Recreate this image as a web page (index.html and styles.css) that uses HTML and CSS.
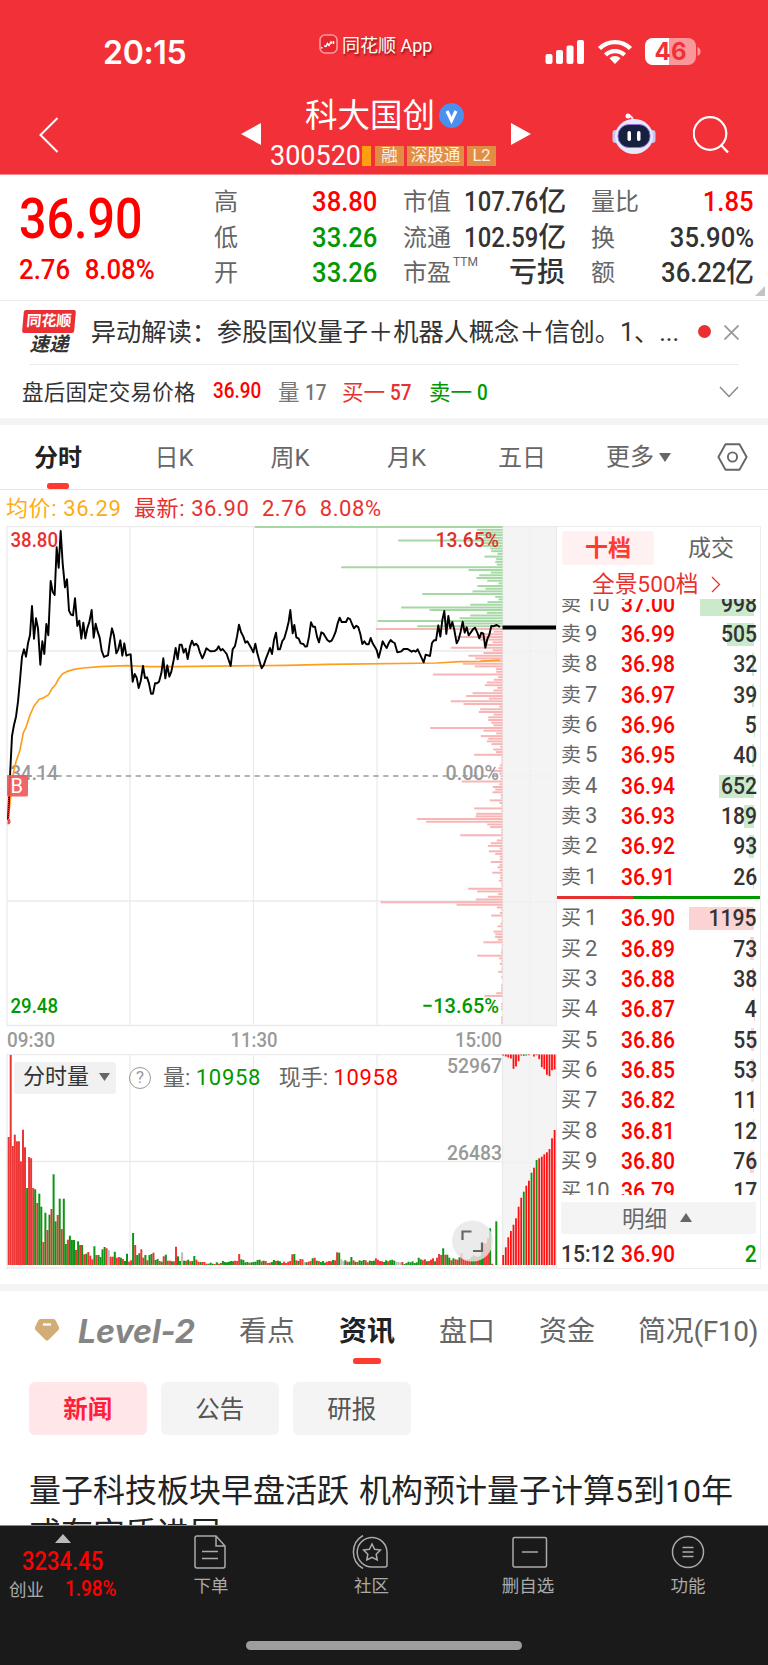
FILE: index.html
```html
<!DOCTYPE html>
<html lang="zh-CN">
<head>
    <meta charset="UTF-8">
    <title>科大国创 300520</title>
    <link rel="stylesheet" href="styles.css">
</head>
<body>
    <header class="header">
        <div class="status-bar">
            <span class="clock">20:15</span>
            <span class="app-name">
                <svg width="19" height="20" viewBox="0 0 19 20"><rect x="1" y="1" width="17" height="18" rx="5" fill="#e8262f" stroke="#f79a9e" stroke-width="1.6"/><path d="M2 13.500l1.500.5M5 12l2 .5 1.500-3 1.500 2 2-3.500 1 1.500M14.500 7v3" fill="none" stroke="#fff" stroke-width="1.500"/></svg>
                同花顺 App
            </span>
            <svg class="signals" width="156" height="30" viewBox="545 37 156 30">
                <g fill="#fff">
                    <rect x="545.500" y="54" width="7" height="10" rx="2"/>
                    <rect x="556" y="50" width="7" height="14" rx="2"/>
                    <rect x="566.500" y="45.500" width="7" height="18.500" rx="2"/>
                    <rect x="577" y="40" width="7" height="24" rx="2"/>
                    <path d="M615 64l-5.500-5.800a8 8 0 0 1 11 0z"/>
                </g>
                <g fill="none" stroke="#fff" stroke-width="4.400">
                    <path d="M605.500 55a13.500 13.500 0 0 1 19 0"/>
                    <path d="M599.500 48.500a22 22 0 0 1 31 0"/>
                </g>
                <rect x="645" y="38" width="51" height="27" rx="8" fill="#fa979b"/>
                <path d="M653 38h16v27h-16a8 8 0 0 1-8-8v-11a8 8 0 0 1 8-8z" fill="#fff"/>
                <path d="M697.500 47q3 1 3 4.500t-3 4.500z" fill="#fa979b"/>
                <text x="654.500" y="60" class="battery-text" textLength="32">46</text>
            </svg>
        </div>
        <div class="nav-bar">
            <svg class="back" width="20" height="36" viewBox="0 0 20 36"><path d="M18.500 1L1.500 18l17 17" fill="none" stroke="#fff" stroke-width="2"/></svg>
            <svg class="arrow" width="20" height="24" viewBox="0 0 20 24"><path d="M0 12L20 1v22z" fill="#fff"/></svg>
            <div class="stock">
                <h1>科大国创<svg width="25" height="25" viewBox="0 0 25 25"><circle cx="12.500" cy="12.500" r="12.500" fill="#4a90ee"/><path d="M8 8l4.500 9.500L17 8" fill="none" stroke="#fff" stroke-width="3.200"/></svg></h1>
                <div class="stock-code">300520<i></i><b>融</b><b class="wide">深股通</b><b>L2</b></div>
            </div>
            <svg class="arrow" width="20" height="24" viewBox="0 0 20 24"><path d="M20 12L0 1v22z" fill="#fff"/></svg>
            <svg class="robot" width="44" height="42" viewBox="0 0 44 42">
                <path d="M15 2q6 1 6 6" fill="none" stroke="#e5e3f5" stroke-width="2"/>
                <circle cx="16" cy="3" r="2.500" fill="#fff"/>
                <rect x="0.500" y="17" width="6" height="13" rx="3" fill="#c6c7ee"/>
                <rect x="37.500" y="17" width="6" height="13" rx="3" fill="#c6c7ee"/>
                <ellipse cx="22" cy="23.500" rx="19" ry="17.500" fill="#e8e8fa"/>
                <rect x="6" y="11.500" width="32" height="23" rx="11" fill="#17203f" stroke="#8f6fe0" stroke-width="1"/>
                <rect x="15.500" y="18" width="3.500" height="10" rx="1.700" fill="#fff"/>
                <rect x="25" y="18" width="3.500" height="10" rx="1.700" fill="#fff"/>
            </svg>
            <svg width="38" height="38" viewBox="0 0 38 38"><circle cx="17" cy="17.500" r="16.300" fill="none" stroke="#fff" stroke-width="2.200"/><path d="M28 29l7 7.500" stroke="#fff" stroke-width="2.400"/></svg>
        </div>
    </header>

    <section class="quote">
        <div class="quote-main">
            <div class="last num red">36.90</div>
            <div class="change num red"><span>2.76</span><span>8.08%</span></div>
        </div>
        <dl>
            <div><dt>高</dt><dd class="red"><span class="num end">38.80</span></dd></div>
            <div><dt>低</dt><dd class="green"><span class="num end">33.26</span></dd></div>
            <div><dt>开</dt><dd class="green"><span class="num end">33.26</span></dd></div>
        </dl>
        <dl>
            <div><dt>市值</dt><dd><span class="num end cap">107.76</span>亿</dd></div>
            <div><dt>流通</dt><dd><span class="num end cap">102.59</span>亿</dd></div>
            <div><dt>市盈<sup>TTM</sup></dt><dd>亏损</dd></div>
        </dl>
        <dl>
            <div><dt>量比</dt><dd class="red"><span class="num end">1.85</span></dd></div>
            <div><dt>换</dt><dd><span class="num end">35.90%</span></dd></div>
            <div><dt>额</dt><dd><span class="num end">36.22</span>亿</dd></div>
        </dl>
        <svg class="corner" width="10" height="10" viewBox="0 0 10 10"><path d="M10 0v10H0z" fill="#c4c4c4"/></svg>
    </section>

    <section class="notice">
        <div class="express"><b>同花顺</b><i>速递</i></div>
        <p>异动解读：参股国仪量子＋机器人概念＋信创。1、...</p>
        <span class="dot"></span>
        <svg width="15" height="15" viewBox="0 0 15 15"><path d="M.5 .5l14 14M14.500 .5l-14 14" stroke="#999" stroke-width="1.800"/></svg>
    </section>
    <section class="after-hours">
        <span class="label">盘后固定交易价格</span>
        <span class="price"><em class="num red">36.90</em></span>
        <span class="gray vol">量 <em class="num">17</em></span>
        <span class="red2 buy-one">买一 <em class="num">57</em></span>
        <span class="green">卖一 <em class="num">0</em></span>
        <svg width="20" height="12" viewBox="0 0 20 12"><path d="M1 1l9 9.500L19 1" fill="none" stroke="#888" stroke-width="1.500"/></svg>
    </section>

    <nav class="periods">
        <a class="active">分时</a><a>日K</a><a>周K</a><a>月K</a><a>五日</a><a>更多<svg width="12" height="9" viewBox="0 0 12 9"><path d="M0 0h12L6 9z" fill="#666"/></svg></a>
        <svg class="setting" width="31" height="28" viewBox="0 0 31 28"><path d="M8.500 1.300h14L29.600 14l-7.100 12.700h-14L1.400 14z" fill="none" stroke="#666" stroke-width="1.900" stroke-linejoin="round"/><circle cx="15.500" cy="14" r="4.600" fill="none" stroke="#666" stroke-width="1.900"/></svg>
    </nav>
    <div class="legend"><span class="avg">均价: 36.29</span><span>最新: 36.90</span><span>2.76</span><span>8.08%</span></div>

    <main class="board">
        <div class="chart">
            <svg width="557" height="743" viewBox="0 526 557 743">
                <rect x="502.500" y="526" width="53.500" height="499" fill="#f4f4f4"/>
                <rect x="502.500" y="1054" width="53.500" height="211" fill="#f4f4f4"/>
                <g fill="none" stroke="#ebebeb" stroke-width="1.300">
                    <path d="M7 526.500H556.500V1025.500H7zM130 526V1025M253.500 526V1025M377 526V1025M502.500 526V1025M7 651H502M7 901H502"/>
                    <path d="M7 1054.700H556.500V1268H7zM130 1054V1268M253.500 1054V1268M377 1054V1268M502.500 1054V1268M7 1161.500H502"/>
                    <path d="M530 526V1025M530 1054V1265M503 651.500H556M503 776H556M503 902H556M503 1162.500H556" stroke-dasharray="1.500 2.500"/>
                </g>
                <path d="M7 776H502" stroke="#999" stroke-width="1.700" stroke-dasharray="5.300 4.600"/>
                <g id="depth" stroke-width="2"></g>
                <g class="label-text">
                    <text x="10.500" y="546.500" textLength="47.500" lengthAdjust="spacingAndGlyphs" fill="#e93030">38.80</text>
                    <text x="10.500" y="779.500" textLength="47.500" lengthAdjust="spacingAndGlyphs" fill="#999">34.14</text>
                    <text x="10.500" y="1012.500" textLength="47.500" lengthAdjust="spacingAndGlyphs" fill="#090">29.48</text>
                    <text x="435.500" y="546.500" textLength="63.500" lengthAdjust="spacingAndGlyphs" fill="#e03028">13.65%</text>
                    <text x="445.500" y="779.500" textLength="53.500" lengthAdjust="spacingAndGlyphs" fill="#999">0.00%</text>
                    <text x="422" y="1012.500" textLength="77" lengthAdjust="spacingAndGlyphs" fill="#090">−13.65%</text>
                </g>
                <g transform="translate(0 520) scale(.33333)" fill="none" stroke-linejoin="round">
                    <path id="avg" stroke="#ff9d1e" stroke-width="5"/>
                    <path id="price" stroke="#000" stroke-width="5.800"/>
                </g>
                <path d="M502.500 627.500H556" stroke="#000" stroke-width="4"/>
                <path d="M8.500 796v24" stroke="#e93030" stroke-width="1.500" stroke-dasharray="1 1"/>
                <path d="M7.500 818.500a3 3 0 0 1 0 6z" fill="#ef4a50"/>
                <rect x="7" y="775" width="21" height="21.500" rx="1.500" fill="#f05a5a" fill-opacity=".92"/>
                <text x="10.500" y="793" class="buy-mark">B</text>

                <g class="label-text" fill="#999">
                    <text x="7" y="1047" textLength="48" lengthAdjust="spacingAndGlyphs">09:30</text>
                    <text x="230.500" y="1047" textLength="47" lengthAdjust="spacingAndGlyphs">11:30</text>
                    <text x="455" y="1047" textLength="47" lengthAdjust="spacingAndGlyphs">15:00</text>
                    <text x="447" y="1073" textLength="55" lengthAdjust="spacingAndGlyphs">52967</text>
                    <text x="447" y="1160" textLength="55" lengthAdjust="spacingAndGlyphs">26483</text>
                </g>
                <g id="volume"></g>
                <circle cx="472.500" cy="1241" r="20.500" fill="#e6e6e6" fill-opacity=".82"/>
                <path d="M462.500 1240v-8.500h9M482 1242.500v8.500h-9" fill="none" stroke="#666" stroke-width="2.200"/>
            </svg>
            <div class="volume-info">
                <span class="picker">分时量<svg width="11" height="8" viewBox="0 0 11 8"><path d="M0 0h11L5.500 8z" fill="#666"/></svg></span>
                <span class="help">?</span>
                <span>量: <em class="green">10958</em></span>
                <span>现手: <em class="red">10958</em></span>
            </div>
        </div>
        <aside class="book">
            <div class="book-tabs"><span class="active">十档</span><span>成交</span></div>
            <div class="panorama">全景500档<svg width="10" height="17" viewBox="0 0 10 17"><path d="M1 1l7.500 7.500L1 16" fill="none" stroke="#e93030" stroke-width="1.300"/></svg></div>
            <ul class="orders sell" id="sell"></ul>
            <div class="ratio"></div>
            <ul class="orders buy" id="buy"></ul>
            <div class="detail-btn">明细<svg width="12" height="9" viewBox="0 0 12 9"><path d="M0 9h12L6 0z" fill="#666"/></svg></div>
            <div class="tick"><span class="time"><em class="num">15:12</em></span><em class="num red">36.90</em><em class="num end green amount">2</em></div>
        </aside>
    </main>

    <nav class="info-tabs">
        <svg width="26" height="24" viewBox="0 0 26 24"><path d="M6.500 1h13Q21 1 22 3l3 6q.5 1.500-.5 3L14.500 22q-1.500 1.500-3 0L1.500 12Q.5 10.500 1 9l3-6q1-2 2.500-2z" fill="#d2ad77"/><path d="M9 6.500h8" stroke="#fff" stroke-width="2.200"/></svg>
        <a class="level2">Level-2</a><a>看点</a><a class="active">资讯</a><a>盘口</a><a>资金</a><a class="f10">简况(F10)</a>
    </nav>
    <div class="pills"><span class="active">新闻</span><span>公告</span><span>研报</span></div>
    <article class="news">量子科技板块早盘活跃 机构预计量子计算5到10年或有实质进展</article>

    <footer class="toolbar">
        <div class="index">
            <svg width="16" height="9" viewBox="0 0 16 9"><path d="M0 9L8 0l8 9z" fill="#bbb"/></svg>
            <div class="index-value"><em class="num">3234.45</em></div>
            <div class="index-row">创业<em class="num">1.98%</em></div>
        </div>
        <div class="tool t1">
            <svg width="32" height="34" viewBox="0 0 32 34"><path d="M22 1H3Q1 1 1 3v28q0 2 2 2h26q2 0 2-2V11zM22 1v10h9M8 16.500h16M8 23.500h16"/></svg>下单
        </div>
        <div class="tool t2">
            <svg width="38" height="34" viewBox="0 0 38 34"><path d="M21 2.500a14.800 14.800 0 0 0 0 29.600h13q2 0 2-2V17.500a15 15 0 0 0-15-15zM12 .5a19 19 0 0 0 0 33M21 9l2.600 5.300 5.800.8-4.200 4.100 1 5.800-5.200-2.700-5.200 2.700 1-5.800-4.200-4.100 5.800-.8z"/></svg>社区
        </div>
        <div class="tool t3">
            <svg width="36" height="34" viewBox="0 0 36 34"><rect x="1" y="2.500" width="33.500" height="29.500" rx="1.500"/><path d="M10 17h16"/></svg>删自选
        </div>
        <div class="tool t4">
            <svg width="34" height="34" viewBox="0 0 34 34"><circle cx="17" cy="17" r="15.500"/><path d="M11.500 12.500h11M11.500 17h11M11.500 21.500h11"/></svg>功能
        </div>
        <div class="home-bar"></div>
    </footer>
    <script src="chart.js"></script>
</body>
</html>
```
FILE: styles.css
```css
* {
    box-sizing: border-box;
}

body {
    margin: 0;
    width: 768px;
    height: 1665px;
    overflow: hidden;
    background: #fff;
    color: #333;
    font-family: Roboto, "Noto Sans CJK SC", sans-serif;
    font-size: 24px;
    display: flex;
    flex-direction: column;
}

body > * {
    flex-shrink: 0;
}

svg {
    display: block;
    flex-shrink: 0;
}

h1, p, dl, dd, ul {
    margin: 0;
    padding: 0;
    list-style: none;
}

em {
    font-style: normal;
}

/* narrow digits */
.num {
    display: inline-block;
    font-weight: 500;
    transform: scaleX(.88);
    transform-origin: left center;
}

.num.end {
    transform-origin: right center;
}

.red { color: #f00; }
.red2 { color: #e93030; }
.green { color: #090; }
.gray { color: #777; }

/* header */
.header {
    height: 175px;
    background: #f23038;
    color: #fff;
    border-bottom: 1px solid #f8888c;
}

.status-bar {
    height: 90px;
    padding: 31px 67px 0 103px;
    display: flex;
}

.clock {
    width: 216px;
    font: 600 32px/44px Inter, sans-serif;
    letter-spacing: -.3px;
}

.app-name {
    width: 226px;
    height: 26px;
    display: flex;
    align-items: center;
    gap: 4px;
    font-size: 18px;
    white-space: nowrap;
    text-shadow: 1px 2px 2px rgba(80, 0, 0, .6);
}

.signals {
    margin-top: 6px;
}

.battery-text {
    font: 700 24px Inter, sans-serif;
    fill: #f23038;
}

.nav-bar {
    height: 84px;
    padding-left: 39px;
    display: flex;
    align-items: center;
}

.nav-bar .back {
    margin: 5px 182px 0 0;
}

.nav-bar .arrow {
    margin-top: 4px;
}

.stock {
    width: 250px;
    padding-left: 9px;
}

.stock h1 {
    height: 48px;
    margin-top: -2px;
    padding-left: 35px;
    display: flex;
    align-items: center;
    gap: 4px;
    font-size: 32.5px;
    font-weight: 400;
    line-height: 48px;
}

.stock-code {
    height: 30px;
    margin-top: 1px;
    display: flex;
    align-items: center;
    font-size: 27px;
    line-height: 30px;
}

.stock-code i {
    width: 9px;
    height: 20px;
    margin: 0 4px 0 1px;
    background: #ff9e12;
}

.stock-code b {
    width: 29px;
    height: 20px;
    margin-right: 3px;
    background: #e18d44;
    color: #fff1e0;
    font-size: 16.500px;
    font-weight: 400;
    line-height: 19px;
    text-align: center;
}

.stock-code .wide {
    width: 57px;
}

.robot {
    margin: 4px 37px 0 81px;
}

.robot + svg {
    margin-top: 6px;
}

/* quote */
.quote {
    position: relative;
    height: 126px;
    padding: 9px 15px 0 20px;
    display: grid;
    grid-template-columns: 168px 163px 162px 162px;
    gap: 26px;
    border-bottom: 1px solid #e9e9e9;
}

.last {
    height: 69px;
    margin-left: -1px;
    font-size: 55px;
    line-height: 70px;
}

.change {
    display: flex;
    gap: 16px;
    margin-left: -1px;
    font-size: 28.5px;
    line-height: 34px;
    transform: scaleX(.905);
}

.quote dl div {
    display: flex;
    justify-content: space-between;
    height: 35.5px;
    line-height: 36px;
    white-space: nowrap;
}

.quote dt {
    color: #666;
}

.quote dd {
    font-size: 28px;
    font-weight: 500;
}

.quote dd .num {
    transform: scaleX(.915);
}

.quote dd .cap {
    transform: scaleX(.85);
}

.quote dl:nth-child(4) {
    margin-right: -1px;
}

.quote sup {
    margin-left: 2px;
    font-size: 12px;
    line-height: 1;
    vertical-align: 15px;
}

.corner {
    position: absolute;
    right: 3px;
    bottom: 4px;
}

/* notice */
.notice {
    height: 64px;
    margin: 0 29px;
    display: flex;
    align-items: center;
    border-bottom: 1px solid #ececec;
}

.express {
    width: 52px;
    margin: 0 16px 0 -6px;
    text-align: center;
}

.express b {
    display: block;
    height: 23px;
    background: #ea2f35;
    border-radius: 2px;
    color: #fff;
    font-size: 15px;
    line-height: 22px;
    transform: skewX(-5deg);
}

.express i {
    display: block;
    height: 22px;
    font-size: 19.500px;
    font-weight: 700;
    line-height: 23px;
}

.notice p {
    width: 609px;
    margin-top: -6px;
    font-size: 25.3px;
    letter-spacing: -.1px;
    white-space: nowrap;
}

.dot {
    width: 13px;
    height: 13px;
    margin: 0 13px 2px 0;
    border-radius: 50%;
    background: #ea2f2f;
}

.after-hours {
    height: 60px;
    padding: 5px 29px 7px 22px;
    display: flex;
    align-items: center;
    border-bottom: 7px solid #f4f4f4;
    font-size: 21.500px;
    white-space: nowrap;
}

.after-hours .label {
    width: 191px;
    letter-spacing: .2px;
}

.after-hours .price { width: 65px; }
.after-hours .vol { width: 64px; }
.after-hours .buy-one { width: 87px; }

.after-hours svg {
    margin: 3px 0 0 auto;
}

/* period tabs */
.periods {
    height: 65px;
    display: flex;
    align-items: center;
    border-bottom: 1px solid #e6e6e6;
    color: #666;
}

.periods a {
    position: relative;
    width: 116px;
    height: 64px;
    text-align: center;
    line-height: 66px;
}

.periods a:nth-child(4) { width: 117px; }
.periods a:nth-child(5) { width: 114px; }

.periods a:nth-child(6) {
    width: 119px;
    display: flex;
    align-items: center;
    justify-content: center;
    gap: 5px;
}

.active {
    color: #222;
    font-weight: 700;
}

.periods .active::after,
.info-tabs .active::after {
    content: "";
    position: absolute;
    left: 47px;
    bottom: 0;
    width: 22px;
    height: 6px;
    border-radius: 2.500px;
    background: #ff3b30;
}

.setting {
    margin-left: 19px;
}

.legend {
    height: 36px;
    padding-left: 6px;
    display: flex;
    gap: 12.500px;
    color: #e93030;
    font-size: 22px;
    letter-spacing: .6px;
    line-height: 38px;
}

.legend .avg {
    color: #ffac14;
}

/* board */
.board {
    display: flex;
    height: 765px;
    border-bottom: 7px solid #f4f4f4;
}

.chart {
    position: relative;
    width: 557px;
}

.label-text {
    font-size: 21px;
    font-weight: 500;
}

.buy-mark {
    font-size: 20px;
    fill: #fff;
}

.volume-info {
    position: absolute;
    left: 14px;
    top: 535px;
    display: flex;
    align-items: center;
    height: 34px;
    color: #666;
    font-size: 22px;
    line-height: 32px;
    white-space: nowrap;
}

.volume-info > span {
    height: 32px;
    margin-right: 17.500px;
}

.volume-info em {
    letter-spacing: .7px;
}

.volume-info .picker {
    width: 102px;
    height: 32px;
    margin-right: 13px;
    padding: 0 0 2px 9px;
    display: flex;
    align-items: center;
    gap: 10px;
    background: #f1f1f1;
    border-radius: 3px;
    color: #333;
}

.volume-info .help {
    width: 22px;
    height: 22px;
    margin-right: 12px;
    border: 1.500px solid #999;
    border-radius: 50%;
    color: #999;
    font-size: 17px;
    line-height: 19px;
    text-align: center;
}

.book {
    width: 204px;
    height: 743px;
    border: 1px solid #ececec;
    border-width: 1px 1px 1px 0;
}

.book-tabs {
    display: flex;
    height: 43px;
    padding: 4px 0 0 5px;
    font-size: 23px;
    line-height: 35px;
    color: #666;
}

.book-tabs span {
    flex: none;
    width: 92px;
    height: 34px;
    margin-right: 11px;
    text-align: center;
}

.book-tabs .active {
    background: #fff1f1;
    border-radius: 4px;
    color: #ff3b30;
}

.panorama {
    height: 29px;
    padding-left: 35px;
    display: flex;
    align-items: center;
    gap: 13px;
    color: #e93030;
    font-size: 22.700px;
    line-height: 25px;
}

.orders {
    overflow: hidden;
    display: flex;
    flex-direction: column;
}

.orders.sell {
    height: 293px;
    justify-content: flex-end;
}

.orders.buy {
    height: 292px;
    margin-top: 4px;
}

.orders li {
    position: relative;
    flex-shrink: 0;
    height: 30.35px;
    padding: 0 3px 0 4px;
    display: flex;
    align-items: center;
    line-height: 30px;
}

.orders .level {
    width: 60px;
    color: #666;
    font-size: 22px;
    white-space: pre;
}

.orders .level i {
    font-style: normal;
    font-size: 20px;
    margin-right: 4px;
}

.amount {
    position: relative;
    margin-left: auto;
}

.bar {
    position: absolute;
    right: 6px;
    top: 4px;
    height: 23px;
    background: #cbeacb;
}

.buy .bar {
    background: #fbd3d3;
}

.ratio {
    height: 3px;
    margin-top: 4px;
    background: linear-gradient(90deg, #e93030 76px, #090 76px);
}

.detail-btn {
    height: 32px;
    margin: 7px 4px 0;
    padding: 0 0 2px 61px;
    display: flex;
    align-items: center;
    gap: 13px;
    background: #f4f4f4;
    color: #666;
    font-size: 22.500px;
}

.tick {
    display: flex;
    padding: 0 3px 0 4px;
    line-height: 40px;
    white-space: nowrap;
}

.tick .time { width: 60px; }

/* info */
.info-tabs {
    height: 73px;
    padding: 0 0 0 34px;
    display: flex;
    align-items: center;
    color: #666;
    font-size: 28px;
    white-space: nowrap;
}

.info-tabs svg {
    margin-top: 5px;
}

.info-tabs a {
    position: relative;
    width: 100px;
    height: 78px;
    text-align: center;
    line-height: 86px;
}

.info-tabs .level2 {
    width: 157px;
    padding-left: 18px;
    text-align: left;
    color: #858585;
    font-family: Inter, sans-serif;
    font-size: 32px;
    font-style: italic;
    font-weight: 700;
}

.info-tabs .f10 {
    width: 150px;
    padding-left: 21px;
    text-align: left;
    letter-spacing: -.3px;
}

.info-tabs .active::after {
    left: 36px;
    width: 28px;
    bottom: 3px;
}

.pills {
    display: flex;
    gap: 14.500px;
    padding: 18px 29px 0;
}

.pills span {
    width: 117.500px;
    height: 53px;
    border-radius: 6px;
    background: #f4f4f4;
    color: #555;
    text-align: center;
    font-size: 24.500px;
    line-height: 55px;
}

.pills .active {
    background: #ffe6e9;
    color: #ff1f3a;
}

.news {
    height: 90px;
    padding: 35px 20px 0 29px;
    overflow: hidden;
    color: #222;
    font-size: 32px;
    line-height: 43px;
    word-spacing: 2px;
}

/* toolbar */
.toolbar {
    position: relative;
    height: 140px;
    background: #1a1a1a;
    border-top: 1px solid #888;
    display: flex;
    color: #aaa;
    font-size: 17.500px;
}

.index {
    width: 127px;
    padding-top: 8px;
}

.index svg {
    margin-left: 55px;
}

.index .num {
    color: #f00;
}

.index-value {
    height: 37px;
    padding-left: 22px;
    font-size: 25px;
    line-height: 38px;
}

.index-row {
    padding-left: 9px;
    line-height: 18px;
    white-space: nowrap;
}

.index-row em {
    margin-left: 21px;
    font-size: 21.500px;
}

.tool {
    display: flex;
    flex-direction: column;
    align-items: center;
    width: 160px;
    padding-top: 9px;
    line-height: 34px;
}

.tool svg {
    fill: none;
    stroke: #aaa;
    stroke-width: 1.500;
}

.t1 { width: 168px; }
.t2 { width: 153px; }

.t1 svg,
.t2 svg {
    margin-right: 3px;
}

.t3 svg {
    margin-left: 4px;
}

.home-bar {
    position: absolute;
    left: 246px;
    bottom: 15px;
    width: 276px;
    height: 9px;
    border-radius: 5px;
    background: #9e9e9e;
}
```
FILE: chart.js
```js
// 分时价格、均价折线
var price = "24,900 30,768 36,648 42,615 48,590 54,545 60,480 66,410 72,388 78,410 84,370 90,345 96,258 102,356 108,295 114,325 121,434 127,364 133,402 139,312 145,346 152,183 158,215 164,225 170,82 176,143 182,33 188,130 195,202 201,178 207,272 213,284 219,286 225,235 232,318 238,302 244,356 250,308 256,355 262,325 268,306 275,270 281,353 287,311 293,335 299,353 305,392 312,411 318,408 324,406 330,360 336,325 342,347 349,400 355,388 361,361 367,407 373,370 379,407 386,404 392,403 398,485 404,462 410,473 416,504 422,484 429,438 435,474 441,472 447,490 453,521 459,521 465,490 471,490 477,485 484,460 490,415 496,475 502,436 508,470 514,455 521,420 527,384 533,418 539,374 545,374 551,398 557,386 563,417 570,380 576,362 582,376 588,371 594,378 600,398 607,415 613,402 619,385 631,394 644,393 650,389 656,379 662,391 668,387 680,402 692,438 698,388 705,378 711,350 717,314 723,336 730,350 736,368 742,364 748,374 754,385 760,397 766,371 772,400 779,425 785,445 791,436 797,418 810,384 816,402 822,360 828,338 834,388 840,388 847,363 853,355 860,330 866,305 871,270 878,340 883,315 889,352 896,356 902,370 910,372 916,380 921,379 927,350 933,307 939,320 945,320 951,350 957,367 964,337 970,340 976,350 982,360 989,365 995,362 1001,350 1007,335 1013,310 1019,293 1025,306 1038,306 1044,294 1050,297 1056,312 1062,325 1069,317 1075,322 1081,342 1087,372 1093,364 1099,373 1106,373 1112,354 1118,370 1130,390 1136,413 1142,390 1148,364 1154,375 1160,384 1166,370 1172,360 1178,366 1184,369 1192,397 1204,394 1211,387 1223,387 1235,395 1241,392 1247,395 1253,388 1259,401 1271,427 1277,404 1290,408 1296,369 1302,361 1308,361 1315,316 1321,350 1327,300 1333,273 1339,342 1345,288 1351,325 1357,306 1363,330 1370,370 1376,358 1382,335 1388,305 1394,338 1400,322 1406,346 1412,338 1419,328 1425,323 1432,338 1438,355 1444,338 1450,341 1456,383 1462,357 1468,344 1474,318 1480,319 1490,315 1500,321";
var avg = "24,900 32,830 40,760 48,725 60,690 70,638 78,622 90,585 102,558 118,538 130,534 146,524 156,506 166,495 176,476 188,461 200,455 222,448 250,444 300,440 380,437 450,440 520,440 860,436 980,433 1310,429 1380,425 1440,424 1500,420";
document.getElementById("price").setAttribute("d", "M" + price);
document.getElementById("avg").setAttribute("d", "M" + avg);

// 挂单分布，前 38 条为卖盘
var depth = [743,77,67,75,57,313,60,60,37,34,15,54,19,22,17,484,102,35,70,78,46,12,75,51,90,241,22,12,45,97,304,219,47,97,129,375,117,256,
    380,27,67,139,67,30,57,155,29,57,102,82,62,119,83,20,19,209,13,26,47,53,16,27,90,109,41,155,117,10,67,71,27,43,43,34,27,217,57,19,65,43,47,33,7,28,20,85,3,3,3,8,12,37,10,6,6,122,10,29,22,30,5,5,38,9,3,85,
    3,79,81,257,229,46,37,4,4,127,4,17,35,44,8,41,22,8,8,35,9,15,8,31,7,7,11,4,3,103,76,13,44,80,366,138,17,3,8,34,2,2,6,15,3,27,22,22,14,57,2,2,4,4,76,10,3,8,2,3,13,0,4,0,0,4,4,4,19,54,0,0,4,4,4,0,0,4,4,4];
var html = "";
depth.forEach(function (len, i) {
    var y = (527.1 + i * 2.679).toFixed(1);
    html += '<path d="M' + (502.5 - len / 3).toFixed(1) + ' ' + y + 'H502.5" stroke="' + (i < 38 ? "#a5d8a5" : "#f8b5b5") + '"/>';
});
document.getElementById("depth").innerHTML = html;

// 成交量
var color = { r: "#ec3535", g: "#0f9515", n: "#bbb", R: "#ff1010" };
var volume = "r384 r630 r357 r391 r371 r371 r311 r406 r353 g231 r324 r320 r231 g227 r186 g214 g175 r69 g157 r105 g151 r168 g272 g131 r150 g199 r108 g199 g63 r76 g88 g75 g75 r45 g71 r60 g60 r32 g34 r39 r28 r17 g56 r30 g30 g24 g47 g54 r50 n45 r25 r25 g40 r22 r24 g22 r18 g12 g34 r10 r14 g96 r60 g30 g35 r47 r22 g30 r14 g30 g33 r37 g15 g18 r12 g10 r26 g31 r13 r13 g11 r11 r55 g26 g12 n38 g13 r13 g16 r11 g12 g27 r16 r10 g9 r9 r9 r4 g4 g7 g4 r3 g8 r4 r6 g12 g9 g8 g10 g12 g11 r13 r12 r33 g17 g15 g8 g9 r7 g8 g9 g10 g15 g16 r11 g13 r12 r6 r7 g9 g15 r12 g13 g11 r6 r10 r6 r10 r12 r32 g33 r14 g12 r18 r17 n9 g8 r10 r12 g20 r22 g13 r12 g9 g12 g7 r10 r12 r11 g15 r14 r38 g37 n17 n12 g14 r10 g10 g24 r14 g10 r9 g14 g12 g15 r14 r8 g13 g12 g13 r20 r16 r12 r11 g9 g14 r11 g14 g16 g13 n10 n9 n8 r9 g3 g6 g10 g8 g11 g6 g8 g22 g17 r14 r17 g11 r12 r16 r20 g11 r22 r33 r30 g50 r31 g31 g22 r14 g20 r17 r16 g23 r35 r17 r14 r17 r18 g24 g29 r26 r24 g28 g60 r65 r65 r80 g110 r4 n0 g131";
html = "";
function bar(x, y, w, h, c) {
    html += '<rect x="' + x.toFixed(1) + '" y="' + y.toFixed(1) + '" width="' + w + '" height="' + h.toFixed(1) + '" fill="' + color[c] + '"/>';
}
volume.split(" ").forEach(function (v, i) {
    var h = v.slice(1) / 3;
    bar(7.7 + i * 2.04, 1265 - h, 2, h, v[0]);
});
// 盘后
"R30 R53 R83 R102 R121 R140 R175 R202 g220 R238 R253 g277 R292 g315 R320 R325 R332 R338 R348 R380 R405".split(" ").forEach(function (v, i) {
    var h = v.slice(1) / 3;
    bar(502.3 + i * 2.57, 1265 - h, 1.8, h, v[0]);
});
"R3 R6 R9 R12 R43 R36 R20 R3 g4 g3 R2 R0 R6 R2 R14 R38 R44 R61 R65 R47 R45".split(" ").forEach(function (v, i) {
    bar(502.3 + i * 2.57, 1054.5, 1.8, v.slice(1) / 3, v[0]);
});
document.getElementById("volume").innerHTML = html;

// 十档
function orders(id, name, rows) {
    document.getElementById(id).innerHTML = rows.map(function (r) {
        return '<li><span class="bar" style="width:' + (r[2] * 0.0544).toFixed(1) + 'px"></span><span class="level"><i>' + name + '</i>' + r[0] +
            '</span><span class="num red">' + r[1] + '</span><span class="num end amount">' + r[2] + '</span></li>';
    }).join("");
}
orders("sell", "卖", [[10, "37.00", 998], [9, "36.99", 505], [8, "36.98", 32], [7, "36.97", 39], [6, "36.96", 5], [5, "36.95", 40], [4, "36.94", 652], [3, "36.93", 189], [2, "36.92", 93], [1, "36.91", 26]]);
orders("buy", "买", [[1, "36.90", 1195], [2, "36.89", 73], [3, "36.88", 38], [4, "36.87", 4], [5, "36.86", 55], [6, "36.85", 53], [7, "36.82", 11], [8, "36.81", 12], [9, "36.80", 76], [10, "36.79", 17]]);
```
